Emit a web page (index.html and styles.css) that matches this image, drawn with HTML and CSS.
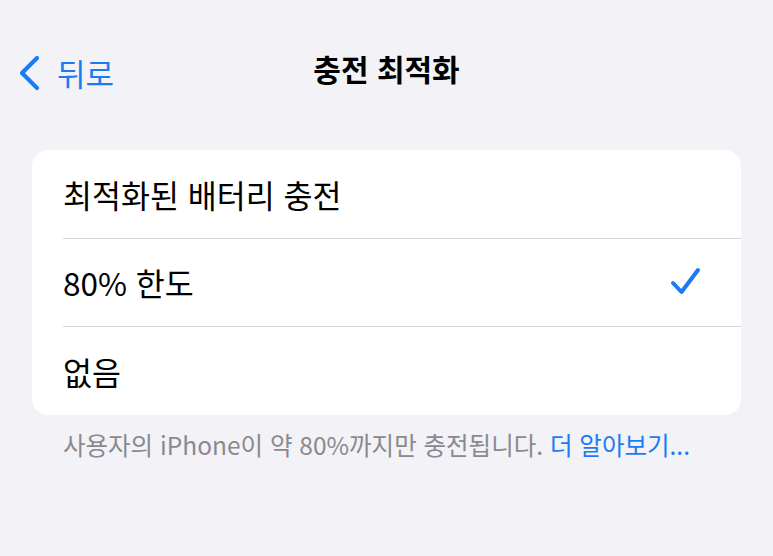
FILE: index.html
```html
<!DOCTYPE html>
<html lang="ko">
<head>
  <meta charset="UTF-8">
  <meta name="viewport" content="width=device-width, initial-scale=1.0">
  <title>충전 최적화</title>
  <link rel="stylesheet" href="styles.css">
</head>
<body>
  <header class="nav">
    <a class="back" href="#">
      <svg class="chevron" width="24" height="36" viewBox="0 0 24 36">
        <path d="M20 3 L5 18 L20 33" fill="none" stroke="currentColor" stroke-width="4.2" stroke-linecap="round" stroke-linejoin="round"/>
      </svg>
      <span>뒤로</span>
    </a>
    <h1 class="title">충전 최적화</h1>
  </header>

  <main class="content">
    <ul class="group">
      <li class="row"><span>최적화된 배터리 충전</span></li>
      <li class="row"><span>80% 한도</span>
        <svg class="check" width="34" height="32" viewBox="0 0 34 32">
          <path d="M4 17 L12.5 26 L29 4" fill="none" stroke="currentColor" stroke-width="4" stroke-linecap="round" stroke-linejoin="round"/>
        </svg>
      </li>
      <li class="row"><span>없음</span></li>
    </ul>
    <p class="footer">사용자의 iPhone이 약 80%까지만 충전됩니다. <a href="#">더 알아보기...</a></p>
  </main>
</body>
</html>
```

FILE: styles.css
```css
body { margin: 0; background: #f2f2f7; font-family: "Noto Sans CJK KR", "Noto Sans", sans-serif; color: #000; }
.nav { position: relative; height: 140px; display: flex; align-items: flex-start; }
.back { display: flex; align-items: center; gap: 16px; margin: 50px 0 0 17px; color: #1a7cf5; text-decoration: none; font-size: 31px; }
.title { position: absolute; left: 0; right: 0; top: 46px; margin: 0; text-align: center; font-size: 30px; font-weight: 700; }
.content { padding: 10px 32px 0 32px; }
.group { list-style: none; margin: 0; padding: 0 0 0 31px; background: #fff; border-radius: 16px; }
.row { display: flex; align-items: center; justify-content: space-between; height: 87.5px; padding-right: 38px; font-size: 31.5px; border-bottom: 1px solid #d8d8dc; }
.row:last-child { border-bottom: none; }
.check { color: #1a7cf5; }
.footer { margin: 12px 0 0 31px; font-size: 24.5px; color: #8a8a8e; }
.footer a { color: #1a7cf5; text-decoration: none; }
```
